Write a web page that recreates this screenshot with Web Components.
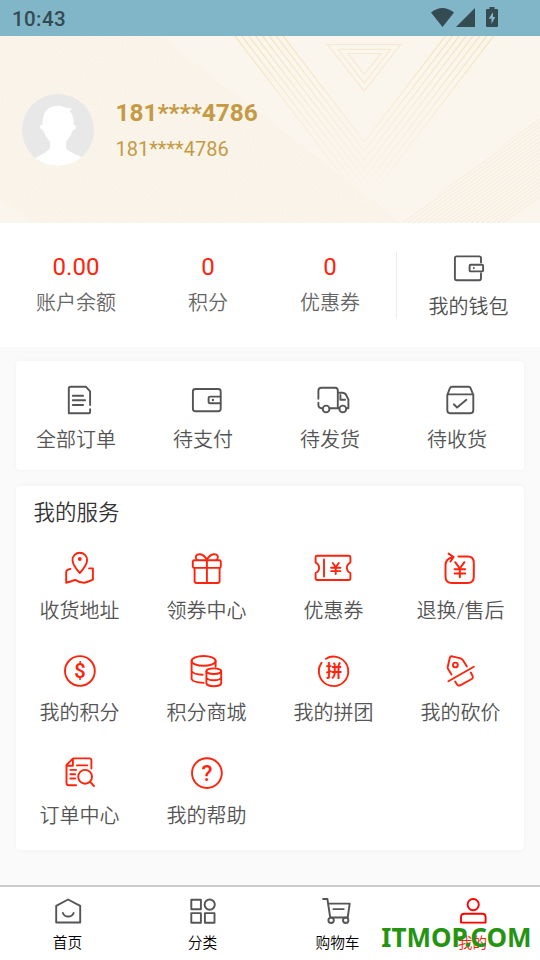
<!DOCTYPE html>
<html lang="zh-CN">
<head>
<meta charset="utf-8">
<meta name="viewport" content="width=device-width, initial-scale=1">
<title>我的</title>
<style>
html,body{margin:0;height:100%;background:#fafafa}
body{font-family:Roboto,"Noto Sans CJK SC",sans-serif;color:#555}
</style>
</head>
<body>
<account-page></account-page>
<script>
const ICONS = {
  purse: '<path d="M32.4 14.5V10.300Q32.400 8.400 30.500 8.400H8.200Q6.300 8.400 6.300 10.300V30.300Q6.300 32.300 8.200 32.300H30.500Q32.400 32.300 32.400 30.300V25.300"/><rect x="21" y="16.700" width="13.500" height="6.700" rx="1"/><circle class="f" cx="25.200" cy="20" r="1"/>',
  doc: '<path d="M30.500 25V11.300L26.200 6.700H11Q9.200 6.700 9.200 8.500V33.300H29.500Q30.500 33.300 30.500 32V29.300M13.200 15.700H23.500M13.200 20.300H25.500M13.200 25H23.500"/>',
  pay: '<rect x="6.300" y="9" width="27.800" height="22.300" rx="2.500"/><path d="M34 16.600H23.500Q22 16.600 22 18V22Q22 23.300 23.500 23.300H34"/><circle class="f" cx="26.300" cy="20" r="1.200"/>',
  truck: '<path d="M4.800 18.800V10.700Q4.800 7.800 7.800 7.800H21.500Q24.200 7.800 24.200 10.500V28.300M4.800 22.800V25Q4.800 28.300 9 28.300M16 28.300H25.700M24.200 12.800H28.500Q31.500 12.800 32.800 15.500L34.800 19.500V28.300H32.800M26.800 15V19.700H31.500"/><circle cx="12.500" cy="29" r="3.400"/><circle cx="29.200" cy="29" r="3.400"/>',
  box: '<path d="M6.700 15L9.300 8.200Q10 6.700 11.500 6.700H28Q29.400 6.700 30 8.200L32.700 15V30.300Q32.700 33.200 29.800 33.200H9.700Q6.700 33.200 6.700 30.300ZM6.700 14.400H32.700M13.200 24.300L16.500 27.500L25.800 19.800"/>',
  map: '<path d="M20.200 25Q12.900 17 12.900 12A7.300 7.300 0 0 1 27.500 12Q27.500 17 20.200 25ZM10.800 21Q6.600 21.700 6.600 24V34.700Q11 33.800 15.500 31.900Q20 34.800 24.800 34.700Q28.500 34 33.300 31.700V20.400H29.500"/><circle class="f" cx="20.200" cy="11" r="1.900"/>',
  gift: '<rect x="6.200" y="12.200" width="28" height="7.700" rx="1.500"/><path d="M8 20V33Q8 35 10 35H31Q33 35 33 33V20M20.300 12V35M20.300 11.800Q17.500 6.500 13.500 6.200C9 6 8 9.500 10.500 12M20.300 11.800Q23 6.500 27 6.200C31.500 6 32.500 9.500 30 12"/>',
  coupon: '<path d="M2 9.300Q2 7.800 3.500 7.800H35.300Q36.800 7.800 36.800 9.300V14.500A5.700 5.700 0 0 0 36.800 25V30.300Q36.800 32 35.100 32H3.700Q2 32 2 30.300V25A5.700 5.700 0 0 0 2 14.500ZM10.400 11.500V28.500M19.200 15L22.100 19.300L25.200 15M17.500 19.700H26.800M17.500 23.100H26.800M22.100 19.300V26"/>',
  refund: '<path d="M17.800 8.600H27Q33.200 8.600 33.200 15V28.500Q33.200 35 27 35H11.200Q4.900 35 4.900 28.500V17Q4.900 10.500 12.500 9.200M8 5.600L13 9L9.800 13.500M14.600 14.200L19.200 20.500L23.800 14.200M14 21.200H24.500M14 25.600H24.500M19.200 20.500V29.300" stroke-width="2"/>',
  points: '<circle cx="20.300" cy="20" r="14.900"/><text x="20.300" y="27.200" font-size="20" font-weight="600">$</text>',
  coins: '<ellipse cx="17" cy="9.900" rx="12" ry="4.900"/><path d="M5 10V28Q6 31.300 17 31.900M29 10V15.700M5 20Q6.500 23.500 16 23.700"/><ellipse cx="27.200" cy="20.200" rx="7.400" ry="2.800"/><path d="M19.800 20.200V32.500Q21 35.200 27.200 35.200T34.600 32.500V20.200M19.800 26.500Q21 29.300 27.200 29.300T34.600 26.500"/>',
  group: '<path d="M12.300 7.800A14.700 14.700 0 1 1 8 11.800"/><text x="20.300" y="26.200" font-size="16.500" font-weight="700">拼</text>',
  cut: '<path d="M7.800 30.300L33.200 15.700M10.900 23.500L7.500 18Q6.900 17 7.100 16L9.200 6.800Q9.700 5 11.500 5.300L20 7.300Q21.500 8 22.200 9L26.300 15.400M14.500 30.500L16.500 33.600Q17.700 35 19.500 34.300L31.200 28Q32.800 26.800 32 25L30.200 21.500"/><circle cx="14.800" cy="14" r="2.400"/>',
  search: '<path d="M31.800 15.500V7.500Q31.800 5.400 29.700 5.400H13.500L6.900 12V30Q6.900 32.200 9 32.200H16.500M13.300 5.600V12.800H7M17.300 12.400H27.700M10.800 16.900H16.500M10.800 21.200H15.500M10.800 25.500H15.500M30.400 28.700L34.300 33"/><circle cx="25.500" cy="23.800" r="6.900"/>',
  help: '<circle cx="20.300" cy="20.100" r="14.900"/><text x="20.300" y="27.900" font-size="22.500" font-weight="500">?</text>',
  home: '<path d="M8.600 14.800L20.500 8.500L32.600 14.800V31.500H8.600ZM15.300 22A5.600 5 0 0 0 26 22"/>',
  grid: '<rect x="8.700" y="8.700" width="9.600" height="9.600"/><circle cx="27.100" cy="13.600" r="5.100"/><rect x="8.700" y="22.100" width="9.600" height="9.600"/><rect x="22.300" y="22.100" width="9.600" height="9.600"/>',
  cart: '<path d="M5.500 8H9.800L12.600 26.500H30.100L32.100 12.600H10.600M15.800 18.100H26.200"/><circle cx="13.500" cy="29.300" r="2.700"/><circle cx="28.100" cy="29.300" r="2.700"/>',
  person: '<circle cx="20.600" cy="13.600" r="5.600"/><path d="M8.400 31.600V26Q8.400 22.700 11.700 22.700H29.700Q33 22.700 33 26V31.600Z"/>'
};

/* Registers an element whose open shadow root is filled by render(element). */
function define(name, render) {
  customElements.define(name, class extends HTMLElement {
    connectedCallback() {
      if (!this.shadowRoot) this.attachShadow({mode: 'open'}).innerHTML = render(this);
    }
  });
}

define('line-icon', el => `<style>
:host{display:block;width:40px;height:40px;flex:none}
svg{display:block;fill:none;stroke:currentColor;stroke-width:var(--stroke,1.9);stroke-linecap:round;stroke-linejoin:round}
.f,text{fill:currentColor;stroke:none}
text{text-anchor:middle;font-family:Roboto,"Noto Sans CJK SC",sans-serif}
</style><svg width="40" height="40" viewBox="0.400 0 40 40">${ICONS[el.getAttribute('name')]}</svg>`);

define('status-bar', () => `<style>
:host{display:flex;height:36px;background:#81b6c8;color:#344b52;align-items:center;justify-content:space-between;box-sizing:border-box;padding:0 40px 0 12px}
span{font:500 20.500px/36px Roboto,sans-serif;letter-spacing:.4px;padding-top:2px}
svg{display:block;fill:currentColor}
</style><span>10:43</span>
<svg width="70" height="36" viewBox="430 0 70 36"><path d="M431 12.500Q442.300 3.500 454 12.500L442.500 27ZM456 27L475 8V27Z"/><path fill-rule="evenodd" d="M489.500 9V7H494.500V9H497Q498 9 498 10V26Q498 27 497 27H487Q486 27 486 26V10Q486 9 487 9ZM493 12L488.700 18.700H491.500V24L495.300 17H493Z"/></svg>`);

/* Header ornament: fine diagonal hatching, nested chevrons and triangles. */
function ornament() {
  let left = '', right = '', chev = '';
  for (let y = -370; y < 187; y += 3.3) left += `M0 ${y}l540 356`;
  for (let y = 80; y < 560; y += 3.7) right += `M300 ${y + 60}l240 -168`;
  for (let i = 0; i < 8; i++) {
    const a = 106 + i * 9, w = (a + 4) * .765;
    chev += `M${364.300 - w} -4L364.300 ${a}L${364.300 + w} -4`;
  }
  return `<svg width="540" height="187" viewBox="0 0 540 187" fill="none">
<defs><linearGradient id="g" x1="0" y1="0" x2="0" y2="170" gradientUnits="userSpaceOnUse"><stop stop-color="#f5e2bc"/><stop offset=".55" stop-color="#f7eedb"/><stop offset="1" stop-color="#fbf6ed"/></linearGradient>
<clipPath id="l"><path d="M0 0H160L402 187H33L0 164Z"/></clipPath><clipPath id="r"><path d="M400 187L540 81V164L505 187Z"/></clipPath></defs>
<path clip-path="url(#l)" d="${left}" stroke="#f5eddb" stroke-width=".7"/>
<path clip-path="url(#r)" d="${right}" stroke="#f3ead6" stroke-width=".8"/>
<path d="${chev}" stroke="url(#g)" stroke-width="1.200"/>
<path d="M327.500 8.500H400.500L364.300 55ZM338 13.300H390.500L364.300 47ZM348 17.500H380.700L364.300 38.500Z" stroke="#f6e9cf" stroke-width="1.200"/></svg>`;
}

define('profile-header', () => `<style>
:host{display:flex;position:relative;height:187px;background:#fbf6ed;color:#c59a45;overflow:hidden}
.bg{position:absolute;inset:0}
.row{position:relative;display:flex;padding:58px 0 0 22px;gap:21.500px;box-sizing:border-box}
.name{font:700 24.400px/28px Roboto,sans-serif;padding-top:5px}
.sub{font:400 20px/24px Roboto,sans-serif;padding-top:10px}
</style><div class="bg">${ornament()}</div><div class="row">
<svg width="72" height="72" viewBox="0 0 72 72"><defs><clipPath id="c"><circle cx="36" cy="36" r="36"/></clipPath></defs><circle cx="36" cy="36" r="36" fill="#e8e8e8"/><path clip-path="url(#c)" fill="#fff" d="M13 64Q26 58 28 54V48Q23 42 21 36Q17 35 18.500 31L20.500 31Q20 20 26 15Q31 11 39 12Q46 15 50 14L48 17.500Q52 21 51.500 31Q55 31 53.500 35Q52 36 51 36Q49 42 44 48V54Q46 58 60 63Q50 73 36 73T13 64Z"/></svg>
<div><div class="name">181****4786</div><div class="sub">181****4786</div></div></div>`);

define('stat-item', el => `<style>
:host{display:flex;flex-direction:column;align-items:center}
b{font:400 24px/28px Roboto,sans-serif;color:#fe230c}
span{font-size:20px;line-height:30px;margin-top:7px;color:#666;font-weight:350}
</style><b>${el.getAttribute('value')}</b><span><slot></slot></span>`);

define('balance-row', () => `<style>
:host{display:flex;height:124px;background:#fff;box-sizing:border-box;padding-left:15px}
stat-item{width:122px;padding-top:30px}
stat-item:nth-child(3){width:142px;margin-right:-10px;margin-left:-10px}
i{width:1px;height:67px;background:#ececec;margin:29px 0 0 5px}
.wallet{flex:1;display:flex;flex-direction:column;align-items:center;padding-top:25px;font-size:20px;line-height:30px;font-weight:350;color:#505050}
.wallet line-icon{margin-bottom:4px;color:#555}
stat-item:first-of-type{margin-right:10px}
</style><stat-item value="0.00">账户余额</stat-item><stat-item value="0">积分</stat-item><stat-item value="0">优惠券</stat-item><i></i><div class="wallet"><line-icon name="purse"></line-icon>我的钱包</div>`);

define('menu-item', el => `<style>
:host{display:flex;flex-direction:column;align-items:center;color:var(--icon)}
span{font-size:20px;line-height:30px;font-weight:350;color:#555;margin-top:var(--gap,7px);margin-right:var(--shift,0);white-space:nowrap}
</style><line-icon name="${el.getAttribute('icon')}"></line-icon><span><slot></slot></span>`);

define('menu-card', el => `<style>
:host{display:block;margin:0 16px;background:#fff;border-radius:4px;box-shadow:0 0 4px rgba(0,0,0,.045);box-sizing:border-box}
h2{margin:0;padding:11px 0 0 17.500px;font-size:21.500px;line-height:32px;font-weight:350;color:#333;height:42px;box-sizing:border-box}
.grid{display:grid;grid-template-columns:repeat(4,1fr);grid-auto-rows:102.500px}
</style>${el.hasAttribute('heading') ? `<h2>${el.getAttribute('heading')}</h2>` : ''}<div class="grid"><slot></slot></div>`);

define('nav-tab', el => `<style>
:host{display:flex;flex:1;flex-direction:column;align-items:center;font-size:14.700px;line-height:22px;font-weight:350;--stroke:1.900;padding-top:4px}
line-icon{color:var(--icon,#555);margin-bottom:.5px}
</style><line-icon name="${el.getAttribute('icon')}"></line-icon><slot></slot>`);

define('tab-bar', () => `<style>
:host{display:flex;position:relative;height:75px;background:#fff;border-top:2px solid #ccc;box-sizing:border-box;color:#000}
.mine{color:#fa230a;--icon:#f00}
.mark{position:absolute;right:8.500px;top:33px;font:700 26px/34px "Noto Sans",sans-serif;color:#269413;white-space:nowrap}
</style><nav-tab icon="home">首页</nav-tab><nav-tab icon="grid">分类</nav-tab><nav-tab icon="cart">购物车</nav-tab><nav-tab class="mine" icon="person">我的</nav-tab><div class="mark">ITMOP.COM</div>`);

define('account-page', () => `<style>
:host{display:flex;flex-direction:column;width:540px;height:960px;overflow:hidden;background:#fafafa}
.orders{height:109px;margin-top:14px;padding-top:19px;--icon:#555;--gap:5px;--shift:7px}
.services{height:364px;margin-top:16px;padding-top:0;--icon:#fe230c;--gap:7.500px}
.services menu-item{padding-top:20px}
tab-bar{margin-top:auto}
</style><status-bar></status-bar><profile-header></profile-header><balance-row></balance-row>
<menu-card class="orders"><menu-item icon="doc">全部订单</menu-item><menu-item icon="pay">待支付</menu-item><menu-item icon="truck">待发货</menu-item><menu-item icon="box">待收货</menu-item></menu-card>
<menu-card class="services" heading="我的服务">
<menu-item icon="map">收货地址</menu-item><menu-item icon="gift">领券中心</menu-item><menu-item icon="coupon">优惠券</menu-item><menu-item icon="refund">退换/售后</menu-item>
<menu-item icon="points">我的积分</menu-item><menu-item icon="coins">积分商城</menu-item><menu-item icon="group">我的拼团</menu-item><menu-item icon="cut">我的砍价</menu-item>
<menu-item icon="search">订单中心</menu-item><menu-item icon="help">我的帮助</menu-item></menu-card>
<tab-bar></tab-bar>`);
</script>
</body>
</html>
